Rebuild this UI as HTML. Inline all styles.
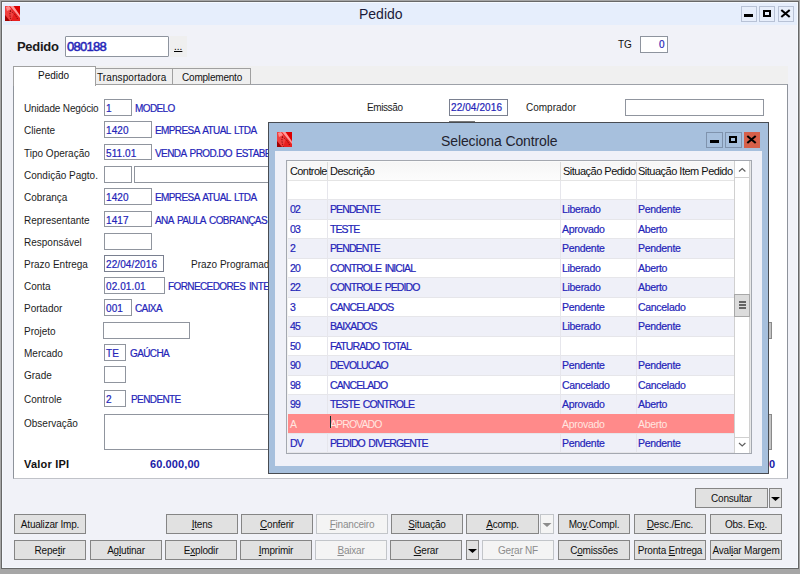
<!DOCTYPE html>
<html><head><meta charset="utf-8"><style>
html,body{margin:0;padding:0;width:800px;height:574px;overflow:hidden;background:#a6a6a6}
body>div,body>svg{position:absolute}
div{position:absolute}
.t{white-space:nowrap;font-family:"Liberation Sans", sans-serif}
u{text-decoration:underline;text-underline-offset:1px}
</style></head><body>
<div style="left:0px;top:0px;width:800px;height:574px;background:#a6a6a6"></div>
<div style="left:1px;top:1px;width:798px;height:568px;background:#686868"></div>
<div style="left:2px;top:2px;width:796px;height:566px;background:#f5f9ff"></div>
<div style="left:3px;top:3px;width:794px;height:564px;background:#f1f2f8"></div>
<div style="left:3px;top:3px;width:794px;height:22px;background:#e6eefc"></div>
<svg style="position:absolute;left:5px;top:6px" width="15" height="15" viewBox="0 0 15 15"><rect x="0" y="0" width="15" height="15" fill="#dc0000"/><path d="M0 0 L8 0 L15 10 L15 15 L0 15 Z" fill="#e82020"/><path d="M5 0 L8.5 0 L15 9.5 L15 12 Z" fill="#ff9898"/><path d="M0 0 L4 0 L9 7 L6 15 L0 15 Z" fill="#f04040"/><path d="M1 1 L4 0 L6 3 L2 5 Z" fill="#ff8c8c"/><path d="M0 9 L0 15 L5 15 Z" fill="#a00000"/><path d="M5.5 4.5 Q4 9 6.5 15" stroke="#7a0000" stroke-width="1" stroke-dasharray="1.3 1.2" fill="none"/><path d="M5 5 Q10 7 12.5 13" stroke="#7a0000" stroke-width="1" stroke-dasharray="1.3 1.2" fill="none"/></svg>
<div class="t" style="left:359px;top:7.15px;font-size:14px;line-height:14px;color:#1b1b3a;font-weight:400;letter-spacing:0px;">Pedido</div>
<div style="left:741px;top:6px;width:16px;height:16px;background:#e7eefb;border:1px solid #b8c2d6;box-sizing:border-box"></div>
<div style="left:744px;top:14px;width:9px;height:3px;background:#000"></div>
<div style="left:759px;top:6px;width:16px;height:16px;background:#e7eefb;border:1px solid #b8c2d6;box-sizing:border-box"></div>
<div style="left:763px;top:10px;width:8px;height:7px;border:2px solid #000;border-top-width:2.5px;box-sizing:border-box"></div>
<div style="left:778px;top:6px;width:16px;height:16px;background:#e7eefb;border:1px solid #b8c2d6;box-sizing:border-box"></div>
<svg style="position:absolute;left:780px;top:9px" width="11" height="9"><path d="M1.3 1 L9.7 8 M9.7 1 L1.3 8" stroke="#000" stroke-width="2.1"/></svg>
<div class="t" style="left:17px;top:40.0px;font-size:13px;line-height:13px;color:#1a1a1a;font-weight:700;letter-spacing:-0.3px;">Pedido</div>
<div style="left:65px;top:36px;width:104px;height:21px;background:#fff;border:1px solid #8e949e;box-sizing:border-box;border-radius:1px"></div>
<div class="t" style="left:67px;top:40.0px;font-size:13px;line-height:13px;color:#2424b8;font-weight:400;letter-spacing:-0.75px;-webkit-text-stroke:0.5px #2424b8">080188</div>
<div style="left:170px;top:36px;width:17px;height:21px;background:#efefef"></div>
<div class="t" style="left:174px;top:41.54px;font-size:10px;line-height:10px;color:#000;font-weight:400;letter-spacing:0px;"><u>...</u></div>
<div class="t" style="left:618px;top:39.54px;font-size:10px;line-height:10px;color:#111;font-weight:400;letter-spacing:0px;">TG</div>
<div style="left:640px;top:36px;width:28px;height:17px;background:#fff;border:1px solid #8e949e;box-sizing:border-box"></div>
<div class="t" style="left:659px;top:39.54px;font-size:10px;line-height:10px;color:#2424b8;font-weight:400;letter-spacing:0px;;-webkit-text-stroke:0.2px #2424b8">0</div>
<div style="left:13px;top:66px;width:775px;height:18px;background:#f0f0f0"></div>
<div style="left:13px;top:84px;width:775px;height:395px;background:#fff;border:1px solid #8e939b;border-top-color:#9da1a8;border-bottom-color:#c0c2c8;box-sizing:border-box"></div>
<div style="left:95px;top:68px;width:78px;height:17px;background:#efefef;border:1px solid #a0a0a0;box-sizing:border-box"></div>
<div style="left:172px;top:68px;width:79px;height:17px;background:#efefef;border:1px solid #a0a0a0;box-sizing:border-box"></div>
<div style="left:13px;top:66px;width:83px;height:20px;background:#fff;border:1px solid #a0a0a0;border-bottom:none;box-sizing:border-box"></div>
<div class="t" style="left:38px;top:70.53999999999999px;font-size:10px;line-height:10px;color:#111;font-weight:400;letter-spacing:0px;">Pedido</div>
<div class="t" style="left:97px;top:72.53999999999999px;font-size:10px;line-height:10px;color:#111;font-weight:400;letter-spacing:0.1px;">Transportadora</div>
<div class="t" style="left:182px;top:72.53999999999999px;font-size:10px;line-height:10px;color:#111;font-weight:400;letter-spacing:-0.2px;">Complemento</div>
<div class="t" style="left:24px;top:103.53999999999999px;font-size:10px;line-height:10px;color:#1c1c1c;font-weight:400;letter-spacing:-0.15px;">Unidade Negócio</div>
<div style="left:104px;top:99px;width:28px;height:17px;background:#fff;border:1px solid #90959e;box-sizing:border-box"></div>
<div class="t" style="left:106px;top:103.53999999999999px;font-size:10px;line-height:10px;color:#2424b8;font-weight:400;letter-spacing:0.1px;;-webkit-text-stroke:0.2px #2424b8">1</div>
<div class="t" style="left:135px;top:103.53999999999999px;font-size:10px;line-height:10px;color:#2424b8;font-weight:400;letter-spacing:-0.6px;word-spacing:1.5px;-webkit-text-stroke:0.2px #2424b8">MODELO</div>
<div class="t" style="left:24px;top:125.53999999999999px;font-size:10px;line-height:10px;color:#1c1c1c;font-weight:400;letter-spacing:0px;">Cliente</div>
<div style="left:104px;top:121px;width:48px;height:17px;background:#fff;border:1px solid #90959e;box-sizing:border-box"></div>
<div class="t" style="left:106px;top:125.53999999999999px;font-size:10px;line-height:10px;color:#2424b8;font-weight:400;letter-spacing:0.1px;;-webkit-text-stroke:0.2px #2424b8">1420</div>
<div class="t" style="left:155px;top:125.53999999999999px;font-size:10px;line-height:10px;color:#2424b8;font-weight:400;letter-spacing:-0.6px;word-spacing:1.5px;-webkit-text-stroke:0.2px #2424b8">EMPRESA ATUAL LTDA</div>
<div class="t" style="left:24px;top:148.54px;font-size:10px;line-height:10px;color:#1c1c1c;font-weight:400;letter-spacing:0px;">Tipo Operação</div>
<div style="left:104px;top:144px;width:48px;height:16px;background:#fff;border:1px solid #90959e;box-sizing:border-box"></div>
<div class="t" style="left:106px;top:148.54px;font-size:10px;line-height:10px;color:#2424b8;font-weight:400;letter-spacing:0.1px;;-webkit-text-stroke:0.2px #2424b8">511.01</div>
<div class="t" style="left:155px;top:148.54px;font-size:10px;line-height:10px;color:#2424b8;font-weight:400;letter-spacing:-0.6px;word-spacing:1.5px;-webkit-text-stroke:0.2px #2424b8">VENDA PROD.DO ESTABELECIMENTO</div>
<div class="t" style="left:24px;top:170.54px;font-size:10px;line-height:10px;color:#1c1c1c;font-weight:400;letter-spacing:0px;">Condição Pagto.</div>
<div style="left:104px;top:166px;width:28px;height:17px;background:#fff;border:1px solid #90959e;box-sizing:border-box"></div>
<div style="left:134px;top:166px;width:200px;height:17px;background:#fff;border:1px solid #90959e;box-sizing:border-box"></div>
<div class="t" style="left:24px;top:192.54px;font-size:10px;line-height:10px;color:#1c1c1c;font-weight:400;letter-spacing:0px;">Cobrança</div>
<div style="left:104px;top:188px;width:48px;height:17px;background:#fff;border:1px solid #90959e;box-sizing:border-box"></div>
<div class="t" style="left:106px;top:192.54px;font-size:10px;line-height:10px;color:#2424b8;font-weight:400;letter-spacing:0.1px;;-webkit-text-stroke:0.2px #2424b8">1420</div>
<div class="t" style="left:155px;top:192.54px;font-size:10px;line-height:10px;color:#2424b8;font-weight:400;letter-spacing:-0.6px;word-spacing:1.5px;-webkit-text-stroke:0.2px #2424b8">EMPRESA ATUAL LTDA</div>
<div class="t" style="left:24px;top:215.54px;font-size:10px;line-height:10px;color:#1c1c1c;font-weight:400;letter-spacing:0px;">Representante</div>
<div style="left:104px;top:211px;width:48px;height:16px;background:#fff;border:1px solid #90959e;box-sizing:border-box"></div>
<div class="t" style="left:106px;top:215.54px;font-size:10px;line-height:10px;color:#2424b8;font-weight:400;letter-spacing:0.1px;;-webkit-text-stroke:0.2px #2424b8">1417</div>
<div class="t" style="left:155px;top:215.54px;font-size:10px;line-height:10px;color:#2424b8;font-weight:400;letter-spacing:-0.6px;word-spacing:1.5px;-webkit-text-stroke:0.2px #2424b8">ANA PAULA COBRANÇAS</div>
<div class="t" style="left:24px;top:237.54px;font-size:10px;line-height:10px;color:#1c1c1c;font-weight:400;letter-spacing:0px;">Responsável</div>
<div style="left:104px;top:233px;width:48px;height:17px;background:#fff;border:1px solid #90959e;box-sizing:border-box"></div>
<div class="t" style="left:24px;top:259.54px;font-size:10px;line-height:10px;color:#1c1c1c;font-weight:400;letter-spacing:0px;">Prazo Entrega</div>
<div style="left:104px;top:255px;width:60px;height:17px;background:#fff;border:1px solid #7a8090;box-sizing:border-box"></div>
<div class="t" style="left:106px;top:259.54px;font-size:10px;line-height:10px;color:#2424b8;font-weight:400;letter-spacing:0.1px;;-webkit-text-stroke:0.2px #2424b8">22/04/2016</div>
<div class="t" style="left:24px;top:281.54px;font-size:10px;line-height:10px;color:#1c1c1c;font-weight:400;letter-spacing:0px;">Conta</div>
<div style="left:104px;top:277px;width:61px;height:17px;background:#fff;border:1px solid #90959e;box-sizing:border-box"></div>
<div class="t" style="left:106px;top:281.54px;font-size:10px;line-height:10px;color:#2424b8;font-weight:400;letter-spacing:0.1px;;-webkit-text-stroke:0.2px #2424b8">02.01.01</div>
<div class="t" style="left:168px;top:281.54px;font-size:10px;line-height:10px;color:#2424b8;font-weight:400;letter-spacing:-0.6px;word-spacing:1.5px;-webkit-text-stroke:0.2px #2424b8">FORNECEDORES INTERNOS</div>
<div class="t" style="left:24px;top:303.54px;font-size:10px;line-height:10px;color:#1c1c1c;font-weight:400;letter-spacing:0px;">Portador</div>
<div style="left:104px;top:299px;width:28px;height:17px;background:#fff;border:1px solid #90959e;box-sizing:border-box"></div>
<div class="t" style="left:106px;top:303.54px;font-size:10px;line-height:10px;color:#2424b8;font-weight:400;letter-spacing:0.1px;;-webkit-text-stroke:0.2px #2424b8">001</div>
<div class="t" style="left:135px;top:303.54px;font-size:10px;line-height:10px;color:#2424b8;font-weight:400;letter-spacing:-0.6px;word-spacing:1.5px;-webkit-text-stroke:0.2px #2424b8">CAIXA</div>
<div class="t" style="left:24px;top:326.54px;font-size:10px;line-height:10px;color:#1c1c1c;font-weight:400;letter-spacing:0px;">Projeto</div>
<div style="left:103px;top:322px;width:87px;height:17px;background:#fff;border:1px solid #90959e;box-sizing:border-box"></div>
<div class="t" style="left:24px;top:348.54px;font-size:10px;line-height:10px;color:#1c1c1c;font-weight:400;letter-spacing:0px;">Mercado</div>
<div style="left:104px;top:344px;width:22px;height:17px;background:#fff;border:1px solid #90959e;box-sizing:border-box"></div>
<div class="t" style="left:106px;top:348.54px;font-size:10px;line-height:10px;color:#2424b8;font-weight:400;letter-spacing:0.1px;;-webkit-text-stroke:0.2px #2424b8">TE</div>
<div class="t" style="left:130px;top:348.54px;font-size:10px;line-height:10px;color:#2424b8;font-weight:400;letter-spacing:-0.6px;word-spacing:1.5px;-webkit-text-stroke:0.2px #2424b8">GAÚCHA</div>
<div class="t" style="left:24px;top:370.54px;font-size:10px;line-height:10px;color:#1c1c1c;font-weight:400;letter-spacing:0px;">Grade</div>
<div style="left:104px;top:366px;width:22px;height:17px;background:#fff;border:1px solid #90959e;box-sizing:border-box"></div>
<div class="t" style="left:24px;top:394.54px;font-size:10px;line-height:10px;color:#1c1c1c;font-weight:400;letter-spacing:0px;">Controle</div>
<div style="left:104px;top:390px;width:22px;height:17px;background:#fff;border:1px solid #90959e;box-sizing:border-box"></div>
<div class="t" style="left:106px;top:394.54px;font-size:10px;line-height:10px;color:#2424b8;font-weight:400;letter-spacing:0.1px;;-webkit-text-stroke:0.2px #2424b8">2</div>
<div class="t" style="left:131px;top:394.54px;font-size:10px;line-height:10px;color:#2424b8;font-weight:400;letter-spacing:-0.6px;word-spacing:1.5px;-webkit-text-stroke:0.2px #2424b8">PENDENTE</div>
<div class="t" style="left:191px;top:259.54px;font-size:10px;line-height:10px;color:#1c1c1c;font-weight:400;letter-spacing:0px;">Prazo Programado</div>
<div class="t" style="left:24px;top:418.54px;font-size:10px;line-height:10px;color:#1c1c1c;font-weight:400;letter-spacing:0px;">Observação</div>
<div style="left:104px;top:414px;width:668px;height:36px;background:#fff;border:1px solid #90959e;box-sizing:border-box"></div>
<div class="t" style="left:24px;top:458.69px;font-size:11px;line-height:11px;color:#111;font-weight:700;letter-spacing:0.2px;">Valor IPI</div>
<div class="t" style="left:150px;top:458.69px;font-size:11px;line-height:11px;color:#1a1aa8;font-weight:700;letter-spacing:0.1px;">60.000,00</div>
<div class="t" style="left:769px;top:458.69px;font-size:11px;line-height:11px;color:#1a1aa8;font-weight:700;letter-spacing:0px;">0</div>
<div class="t" style="left:367px;top:102.53999999999999px;font-size:10px;line-height:10px;color:#1c1c1c;font-weight:400;letter-spacing:-0.4px;">Emissão</div>
<div style="left:449px;top:99px;width:59px;height:17px;background:#fff;border:1px solid #7a8090;box-sizing:border-box"></div>
<div class="t" style="left:451px;top:102.53999999999999px;font-size:10px;line-height:10px;color:#2424b8;font-weight:400;letter-spacing:0.1px;;-webkit-text-stroke:0.2px #2424b8">22/04/2016</div>
<div class="t" style="left:526px;top:102.53999999999999px;font-size:10px;line-height:10px;color:#1c1c1c;font-weight:400;letter-spacing:0px;">Comprador</div>
<div style="left:625px;top:99px;width:139px;height:17px;background:#fff;border:1px solid #90959e;box-sizing:border-box"></div>
<div style="left:449px;top:121px;width:26px;height:1px;background:#777"></div>
<div style="left:768px;top:322px;width:4px;height:17px;background:#c4c4c4;border:1px solid #8a8a8a;border-left:none;box-sizing:border-box"></div>
<div style="left:768px;top:414px;width:4px;height:36px;background:#c4c4c4;border:1px solid #8a8a8a;border-left:none;box-sizing:border-box"></div>
<div style="left:695px;top:488px;width:73px;height:20px;background:#e1e1e1;border:1px solid #858585;box-sizing:border-box"></div>
<div class="t" style="left:695px;width:73px;text-align:center;top:493.54px;font-size:10px;line-height:10px;color:#111;font-weight:400;letter-spacing:-0.2px;">Consultar</div>
<div style="left:769px;top:488px;width:13px;height:20px;background:#e1e1e1;border:1px solid #858585;box-sizing:border-box"></div>
<svg style="position:absolute;left:769px;top:488px" width="13" height="20"><path d="M2.0 9.0 L11.0 9.0 L6.5 13.0 Z" fill="#000"/></svg>
<div style="left:14px;top:514px;width:72px;height:20px;background:#e1e1e1;border:1px solid #858585;box-sizing:border-box"></div>
<div class="t" style="left:14px;width:72px;text-align:center;top:519.54px;font-size:10px;line-height:10px;color:#111;font-weight:400;letter-spacing:-0.2px;">Atualizar Imp.</div>
<div style="left:166px;top:514px;width:72px;height:20px;background:#e1e1e1;border:1px solid #858585;box-sizing:border-box"></div>
<div class="t" style="left:166px;width:72px;text-align:center;top:519.54px;font-size:10px;line-height:10px;color:#111;font-weight:400;letter-spacing:-0.2px;"><u>I</u>tens</div>
<div style="left:241px;top:514px;width:72px;height:20px;background:#e1e1e1;border:1px solid #858585;box-sizing:border-box"></div>
<div class="t" style="left:241px;width:72px;text-align:center;top:519.54px;font-size:10px;line-height:10px;color:#111;font-weight:400;letter-spacing:-0.2px;"><u>C</u>onferir</div>
<div style="left:316px;top:514px;width:72px;height:20px;background:#f4f4f4;border:1px solid #c2c5c9;box-sizing:border-box"></div>
<div class="t" style="left:316px;width:72px;text-align:center;top:519.54px;font-size:10px;line-height:10px;color:#8c8c8c;font-weight:400;letter-spacing:-0.2px;"><u>F</u>inanceiro</div>
<div style="left:391px;top:514px;width:72px;height:20px;background:#e1e1e1;border:1px solid #858585;box-sizing:border-box"></div>
<div class="t" style="left:391px;width:72px;text-align:center;top:519.54px;font-size:10px;line-height:10px;color:#111;font-weight:400;letter-spacing:-0.2px;"><u>S</u>ituação</div>
<div style="left:466px;top:514px;width:73px;height:20px;background:#e1e1e1;border:1px solid #858585;box-sizing:border-box"></div>
<div class="t" style="left:466px;width:73px;text-align:center;top:519.54px;font-size:10px;line-height:10px;color:#111;font-weight:400;letter-spacing:-0.2px;"><u>A</u>comp.</div>
<div style="left:540px;top:514px;width:14px;height:20px;background:#f4f4f4;border:1px solid #c2c5c9;box-sizing:border-box"></div>
<svg style="position:absolute;left:540px;top:514px" width="14" height="20"><path d="M2.5 9.0 L11.5 9.0 L7.0 13.0 Z" fill="#8c8c8c"/></svg>
<div style="left:558px;top:514px;width:72px;height:20px;background:#e1e1e1;border:1px solid #858585;box-sizing:border-box"></div>
<div class="t" style="left:558px;width:72px;text-align:center;top:519.54px;font-size:10px;line-height:10px;color:#111;font-weight:400;letter-spacing:-0.2px;">Mo<u>v</u>.Compl.</div>
<div style="left:634px;top:514px;width:72px;height:20px;background:#e1e1e1;border:1px solid #858585;box-sizing:border-box"></div>
<div class="t" style="left:634px;width:72px;text-align:center;top:519.54px;font-size:10px;line-height:10px;color:#111;font-weight:400;letter-spacing:-0.2px;"><u>D</u>esc./Enc.</div>
<div style="left:710px;top:514px;width:72px;height:20px;background:#e1e1e1;border:1px solid #858585;box-sizing:border-box"></div>
<div class="t" style="left:710px;width:72px;text-align:center;top:519.54px;font-size:10px;line-height:10px;color:#111;font-weight:400;letter-spacing:-0.2px;">Obs. Ex<u>p</u>.</div>
<div style="left:14px;top:540px;width:72px;height:20px;background:#e1e1e1;border:1px solid #858585;box-sizing:border-box"></div>
<div class="t" style="left:14px;width:72px;text-align:center;top:545.54px;font-size:10px;line-height:10px;color:#111;font-weight:400;letter-spacing:-0.2px;">Repe<u>t</u>ir</div>
<div style="left:90px;top:540px;width:72px;height:20px;background:#e1e1e1;border:1px solid #858585;box-sizing:border-box"></div>
<div class="t" style="left:90px;width:72px;text-align:center;top:545.54px;font-size:10px;line-height:10px;color:#111;font-weight:400;letter-spacing:-0.2px;">Ag<u>l</u>utinar</div>
<div style="left:165px;top:540px;width:72px;height:20px;background:#e1e1e1;border:1px solid #858585;box-sizing:border-box"></div>
<div class="t" style="left:165px;width:72px;text-align:center;top:545.54px;font-size:10px;line-height:10px;color:#111;font-weight:400;letter-spacing:-0.2px;">E<u>x</u>plodir</div>
<div style="left:240px;top:540px;width:72px;height:20px;background:#e1e1e1;border:1px solid #858585;box-sizing:border-box"></div>
<div class="t" style="left:240px;width:72px;text-align:center;top:545.54px;font-size:10px;line-height:10px;color:#111;font-weight:400;letter-spacing:-0.2px;"><u>I</u>mprimir</div>
<div style="left:315px;top:540px;width:72px;height:20px;background:#f4f4f4;border:1px solid #c2c5c9;box-sizing:border-box"></div>
<div class="t" style="left:315px;width:72px;text-align:center;top:545.54px;font-size:10px;line-height:10px;color:#8c8c8c;font-weight:400;letter-spacing:-0.2px;"><u>B</u>aixar</div>
<div style="left:390px;top:540px;width:72px;height:20px;background:#e1e1e1;border:1px solid #858585;box-sizing:border-box"></div>
<div class="t" style="left:390px;width:72px;text-align:center;top:545.54px;font-size:10px;line-height:10px;color:#111;font-weight:400;letter-spacing:-0.2px;"><u>G</u>erar</div>
<div style="left:466px;top:540px;width:13px;height:20px;background:#e1e1e1;border:1px solid #858585;box-sizing:border-box"></div>
<svg style="position:absolute;left:466px;top:540px" width="13" height="20"><path d="M2.0 9.0 L11.0 9.0 L6.5 13.0 Z" fill="#000"/></svg>
<div style="left:482px;top:540px;width:72px;height:20px;background:#f4f4f4;border:1px solid #c2c5c9;box-sizing:border-box"></div>
<div class="t" style="left:482px;width:72px;text-align:center;top:545.54px;font-size:10px;line-height:10px;color:#8c8c8c;font-weight:400;letter-spacing:-0.2px;">Ge<u>r</u>ar NF</div>
<div style="left:558px;top:540px;width:72px;height:20px;background:#e1e1e1;border:1px solid #858585;box-sizing:border-box"></div>
<div class="t" style="left:558px;width:72px;text-align:center;top:545.54px;font-size:10px;line-height:10px;color:#111;font-weight:400;letter-spacing:-0.2px;">C<u>o</u>missões</div>
<div style="left:634px;top:540px;width:72px;height:20px;background:#e1e1e1;border:1px solid #858585;box-sizing:border-box"></div>
<div class="t" style="left:634px;width:72px;text-align:center;top:545.54px;font-size:10px;line-height:10px;color:#111;font-weight:400;letter-spacing:-0.2px;">Pronta <u>E</u>ntrega</div>
<div style="left:710px;top:540px;width:72px;height:20px;background:#e1e1e1;border:1px solid #858585;box-sizing:border-box"></div>
<div class="t" style="left:710px;width:72px;text-align:center;top:545.54px;font-size:10px;line-height:10px;color:#111;font-weight:400;letter-spacing:-0.2px;">Aval<u>i</u>ar Margem</div>
<div style="left:268px;top:122px;width:501px;height:352px;background:#484c52"></div>
<div style="left:269px;top:123px;width:499px;height:350px;background:#a7c0dd"></div>
<svg style="position:absolute;left:277px;top:132px" width="15" height="15" viewBox="0 0 15 15"><rect x="0" y="0" width="15" height="15" fill="#dc0000"/><path d="M0 0 L8 0 L15 10 L15 15 L0 15 Z" fill="#e82020"/><path d="M5 0 L8.5 0 L15 9.5 L15 12 Z" fill="#ff9898"/><path d="M0 0 L4 0 L9 7 L6 15 L0 15 Z" fill="#f04040"/><path d="M1 1 L4 0 L6 3 L2 5 Z" fill="#ff8c8c"/><path d="M0 9 L0 15 L5 15 Z" fill="#a00000"/><path d="M5.5 4.5 Q4 9 6.5 15" stroke="#7a0000" stroke-width="1" stroke-dasharray="1.3 1.2" fill="none"/><path d="M5 5 Q10 7 12.5 13" stroke="#7a0000" stroke-width="1" stroke-dasharray="1.3 1.2" fill="none"/></svg>
<div class="t" style="left:441px;top:134.15px;font-size:14px;line-height:14px;color:#23232f;font-weight:400;letter-spacing:-0.1px;">Seleciona Controle</div>
<div style="left:706px;top:132px;width:17px;height:16px;background:#a7c0dd;border:1px solid #7f93ad;box-sizing:border-box"></div>
<div style="left:710px;top:140px;width:9px;height:3px;background:#000"></div>
<div style="left:725px;top:132px;width:17px;height:16px;background:#a7c0dd;border:1px solid #7f93ad;box-sizing:border-box"></div>
<div style="left:729px;top:136px;width:8px;height:7px;border:2px solid #000;border-top-width:2.5px;box-sizing:border-box"></div>
<div style="left:744px;top:132px;width:16px;height:16px;background:#d6604a;border:1px solid #d6604a;box-sizing:border-box"></div>
<svg style="position:absolute;left:746px;top:135px" width="11" height="9"><path d="M1.3 1 L9.7 8 M9.7 1 L1.3 8" stroke="#000" stroke-width="2.1"/></svg>
<div style="left:275px;top:151px;width:487px;height:315px;background:#f0f1f8"></div>
<div style="left:286px;top:160px;width:466px;height:294px;background:#fff;border:1px solid #a4a8b0;box-sizing:border-box"></div>
<div style="left:287px;top:161px;width:463px;height:1px;background:#fafafa"></div>
<div style="left:287px;top:162px;width:447px;height:18px;background:linear-gradient(#f6f6f6,#fcfcfc)"></div>
<div style="left:287px;top:180px;width:447px;height:1px;background:#e4e4e4"></div>
<div style="left:327px;top:162px;width:1px;height:18px;background:#dcdcdc"></div>
<div style="left:560px;top:162px;width:1px;height:18px;background:#dcdcdc"></div>
<div style="left:636px;top:162px;width:1px;height:18px;background:#dcdcdc"></div>
<div class="t" style="left:290px;top:165.69px;font-size:11px;line-height:11px;color:#111;font-weight:400;letter-spacing:-0.6px;">Controle</div>
<div class="t" style="left:330px;top:165.69px;font-size:11px;line-height:11px;color:#111;font-weight:400;letter-spacing:-0.5px;">Descrição</div>
<div class="t" style="left:563px;top:165.69px;font-size:11px;line-height:11px;color:#111;font-weight:400;letter-spacing:-0.5px;">Situação Pedido</div>
<div class="t" style="left:638px;top:165.69px;font-size:11px;line-height:11px;color:#111;font-weight:400;letter-spacing:-0.5px;">Situação Item Pedido</div>
<div style="left:288px;top:181px;width:446px;height:18px;background:#ffffff"></div>
<div style="left:327px;top:181px;width:1px;height:18px;background:#e6e6ec"></div>
<div style="left:560px;top:181px;width:1px;height:18px;background:#e6e6ec"></div>
<div style="left:636px;top:181px;width:1px;height:18px;background:#e6e6ec"></div>
<div style="left:288px;top:199px;width:446px;height:20px;background:#eff0f8"></div>
<div style="left:288px;top:199px;width:446px;height:1px;background:#e6e6ea"></div>
<div style="left:327px;top:199px;width:1px;height:20px;background:#e6e6ec"></div>
<div style="left:560px;top:199px;width:1px;height:20px;background:#e6e6ec"></div>
<div style="left:636px;top:199px;width:1px;height:20px;background:#e6e6ec"></div>
<div class="t" style="left:290px;top:204.11px;font-size:10.5px;line-height:10.5px;color:#2424b8;font-weight:400;letter-spacing:-0.9px;word-spacing:1.5px;-webkit-text-stroke:0.2px #2424b8">02</div>
<div class="t" style="left:330px;top:204.11px;font-size:10.5px;line-height:10.5px;color:#2424b8;font-weight:400;letter-spacing:-0.9px;word-spacing:1.5px;-webkit-text-stroke:0.2px #2424b8">PENDENTE</div>
<div class="t" style="left:562px;top:204.11px;font-size:10.5px;line-height:10.5px;color:#2424b8;font-weight:400;letter-spacing:-0.3px;;-webkit-text-stroke:0.2px #2424b8">Liberado</div>
<div class="t" style="left:638px;top:204.11px;font-size:10.5px;line-height:10.5px;color:#2424b8;font-weight:400;letter-spacing:-0.3px;;-webkit-text-stroke:0.2px #2424b8">Pendente</div>
<div style="left:288px;top:219px;width:446px;height:19px;background:#ffffff"></div>
<div style="left:288px;top:219px;width:446px;height:1px;background:#e6e6ea"></div>
<div style="left:327px;top:219px;width:1px;height:19px;background:#e6e6ec"></div>
<div style="left:560px;top:219px;width:1px;height:19px;background:#e6e6ec"></div>
<div style="left:636px;top:219px;width:1px;height:19px;background:#e6e6ec"></div>
<div class="t" style="left:290px;top:224.11px;font-size:10.5px;line-height:10.5px;color:#2424b8;font-weight:400;letter-spacing:-0.9px;word-spacing:1.5px;-webkit-text-stroke:0.2px #2424b8">03</div>
<div class="t" style="left:330px;top:224.11px;font-size:10.5px;line-height:10.5px;color:#2424b8;font-weight:400;letter-spacing:-0.9px;word-spacing:1.5px;-webkit-text-stroke:0.2px #2424b8">TESTE</div>
<div class="t" style="left:562px;top:224.11px;font-size:10.5px;line-height:10.5px;color:#2424b8;font-weight:400;letter-spacing:-0.3px;;-webkit-text-stroke:0.2px #2424b8">Aprovado</div>
<div class="t" style="left:638px;top:224.11px;font-size:10.5px;line-height:10.5px;color:#2424b8;font-weight:400;letter-spacing:-0.3px;;-webkit-text-stroke:0.2px #2424b8">Aberto</div>
<div style="left:288px;top:238px;width:446px;height:20px;background:#eff0f8"></div>
<div style="left:288px;top:238px;width:446px;height:1px;background:#e6e6ea"></div>
<div style="left:327px;top:238px;width:1px;height:20px;background:#e6e6ec"></div>
<div style="left:560px;top:238px;width:1px;height:20px;background:#e6e6ec"></div>
<div style="left:636px;top:238px;width:1px;height:20px;background:#e6e6ec"></div>
<div class="t" style="left:290px;top:243.11px;font-size:10.5px;line-height:10.5px;color:#2424b8;font-weight:400;letter-spacing:-0.9px;word-spacing:1.5px;-webkit-text-stroke:0.2px #2424b8">2</div>
<div class="t" style="left:330px;top:243.11px;font-size:10.5px;line-height:10.5px;color:#2424b8;font-weight:400;letter-spacing:-0.9px;word-spacing:1.5px;-webkit-text-stroke:0.2px #2424b8">PENDENTE</div>
<div class="t" style="left:562px;top:243.11px;font-size:10.5px;line-height:10.5px;color:#2424b8;font-weight:400;letter-spacing:-0.3px;;-webkit-text-stroke:0.2px #2424b8">Pendente</div>
<div class="t" style="left:638px;top:243.11px;font-size:10.5px;line-height:10.5px;color:#2424b8;font-weight:400;letter-spacing:-0.3px;;-webkit-text-stroke:0.2px #2424b8">Pendente</div>
<div style="left:288px;top:258px;width:446px;height:19px;background:#ffffff"></div>
<div style="left:288px;top:258px;width:446px;height:1px;background:#e6e6ea"></div>
<div style="left:327px;top:258px;width:1px;height:19px;background:#e6e6ec"></div>
<div style="left:560px;top:258px;width:1px;height:19px;background:#e6e6ec"></div>
<div style="left:636px;top:258px;width:1px;height:19px;background:#e6e6ec"></div>
<div class="t" style="left:290px;top:263.11px;font-size:10.5px;line-height:10.5px;color:#2424b8;font-weight:400;letter-spacing:-0.9px;word-spacing:1.5px;-webkit-text-stroke:0.2px #2424b8">20</div>
<div class="t" style="left:330px;top:263.11px;font-size:10.5px;line-height:10.5px;color:#2424b8;font-weight:400;letter-spacing:-0.9px;word-spacing:1.5px;-webkit-text-stroke:0.2px #2424b8">CONTROLE INICIAL</div>
<div class="t" style="left:562px;top:263.11px;font-size:10.5px;line-height:10.5px;color:#2424b8;font-weight:400;letter-spacing:-0.3px;;-webkit-text-stroke:0.2px #2424b8">Liberado</div>
<div class="t" style="left:638px;top:263.11px;font-size:10.5px;line-height:10.5px;color:#2424b8;font-weight:400;letter-spacing:-0.3px;;-webkit-text-stroke:0.2px #2424b8">Aberto</div>
<div style="left:288px;top:277px;width:446px;height:20px;background:#eff0f8"></div>
<div style="left:288px;top:277px;width:446px;height:1px;background:#e6e6ea"></div>
<div style="left:327px;top:277px;width:1px;height:20px;background:#e6e6ec"></div>
<div style="left:560px;top:277px;width:1px;height:20px;background:#e6e6ec"></div>
<div style="left:636px;top:277px;width:1px;height:20px;background:#e6e6ec"></div>
<div class="t" style="left:290px;top:282.11px;font-size:10.5px;line-height:10.5px;color:#2424b8;font-weight:400;letter-spacing:-0.9px;word-spacing:1.5px;-webkit-text-stroke:0.2px #2424b8">22</div>
<div class="t" style="left:330px;top:282.11px;font-size:10.5px;line-height:10.5px;color:#2424b8;font-weight:400;letter-spacing:-0.9px;word-spacing:1.5px;-webkit-text-stroke:0.2px #2424b8">CONTROLE PEDIDO</div>
<div class="t" style="left:562px;top:282.11px;font-size:10.5px;line-height:10.5px;color:#2424b8;font-weight:400;letter-spacing:-0.3px;;-webkit-text-stroke:0.2px #2424b8">Liberado</div>
<div class="t" style="left:638px;top:282.11px;font-size:10.5px;line-height:10.5px;color:#2424b8;font-weight:400;letter-spacing:-0.3px;;-webkit-text-stroke:0.2px #2424b8">Aberto</div>
<div style="left:288px;top:297px;width:446px;height:19px;background:#ffffff"></div>
<div style="left:288px;top:297px;width:446px;height:1px;background:#e6e6ea"></div>
<div style="left:327px;top:297px;width:1px;height:19px;background:#e6e6ec"></div>
<div style="left:560px;top:297px;width:1px;height:19px;background:#e6e6ec"></div>
<div style="left:636px;top:297px;width:1px;height:19px;background:#e6e6ec"></div>
<div class="t" style="left:290px;top:302.11px;font-size:10.5px;line-height:10.5px;color:#2424b8;font-weight:400;letter-spacing:-0.9px;word-spacing:1.5px;-webkit-text-stroke:0.2px #2424b8">3</div>
<div class="t" style="left:330px;top:302.11px;font-size:10.5px;line-height:10.5px;color:#2424b8;font-weight:400;letter-spacing:-0.9px;word-spacing:1.5px;-webkit-text-stroke:0.2px #2424b8">CANCELADOS</div>
<div class="t" style="left:562px;top:302.11px;font-size:10.5px;line-height:10.5px;color:#2424b8;font-weight:400;letter-spacing:-0.3px;;-webkit-text-stroke:0.2px #2424b8">Pendente</div>
<div class="t" style="left:638px;top:302.11px;font-size:10.5px;line-height:10.5px;color:#2424b8;font-weight:400;letter-spacing:-0.3px;;-webkit-text-stroke:0.2px #2424b8">Cancelado</div>
<div style="left:288px;top:316px;width:446px;height:20px;background:#eff0f8"></div>
<div style="left:288px;top:316px;width:446px;height:1px;background:#e6e6ea"></div>
<div style="left:327px;top:316px;width:1px;height:20px;background:#e6e6ec"></div>
<div style="left:560px;top:316px;width:1px;height:20px;background:#e6e6ec"></div>
<div style="left:636px;top:316px;width:1px;height:20px;background:#e6e6ec"></div>
<div class="t" style="left:290px;top:321.11px;font-size:10.5px;line-height:10.5px;color:#2424b8;font-weight:400;letter-spacing:-0.9px;word-spacing:1.5px;-webkit-text-stroke:0.2px #2424b8">45</div>
<div class="t" style="left:330px;top:321.11px;font-size:10.5px;line-height:10.5px;color:#2424b8;font-weight:400;letter-spacing:-0.9px;word-spacing:1.5px;-webkit-text-stroke:0.2px #2424b8">BAIXADOS</div>
<div class="t" style="left:562px;top:321.11px;font-size:10.5px;line-height:10.5px;color:#2424b8;font-weight:400;letter-spacing:-0.3px;;-webkit-text-stroke:0.2px #2424b8">Liberado</div>
<div class="t" style="left:638px;top:321.11px;font-size:10.5px;line-height:10.5px;color:#2424b8;font-weight:400;letter-spacing:-0.3px;;-webkit-text-stroke:0.2px #2424b8">Pendente</div>
<div style="left:288px;top:336px;width:446px;height:19px;background:#ffffff"></div>
<div style="left:288px;top:336px;width:446px;height:1px;background:#e6e6ea"></div>
<div style="left:327px;top:336px;width:1px;height:19px;background:#e6e6ec"></div>
<div style="left:560px;top:336px;width:1px;height:19px;background:#e6e6ec"></div>
<div style="left:636px;top:336px;width:1px;height:19px;background:#e6e6ec"></div>
<div class="t" style="left:290px;top:341.11px;font-size:10.5px;line-height:10.5px;color:#2424b8;font-weight:400;letter-spacing:-0.9px;word-spacing:1.5px;-webkit-text-stroke:0.2px #2424b8">50</div>
<div class="t" style="left:330px;top:341.11px;font-size:10.5px;line-height:10.5px;color:#2424b8;font-weight:400;letter-spacing:-0.9px;word-spacing:1.5px;-webkit-text-stroke:0.2px #2424b8">FATURADO TOTAL</div>
<div style="left:288px;top:355px;width:446px;height:20px;background:#eff0f8"></div>
<div style="left:288px;top:355px;width:446px;height:1px;background:#e6e6ea"></div>
<div style="left:327px;top:355px;width:1px;height:20px;background:#e6e6ec"></div>
<div style="left:560px;top:355px;width:1px;height:20px;background:#e6e6ec"></div>
<div style="left:636px;top:355px;width:1px;height:20px;background:#e6e6ec"></div>
<div class="t" style="left:290px;top:360.11px;font-size:10.5px;line-height:10.5px;color:#2424b8;font-weight:400;letter-spacing:-0.9px;word-spacing:1.5px;-webkit-text-stroke:0.2px #2424b8">90</div>
<div class="t" style="left:330px;top:360.11px;font-size:10.5px;line-height:10.5px;color:#2424b8;font-weight:400;letter-spacing:-0.9px;word-spacing:1.5px;-webkit-text-stroke:0.2px #2424b8">DEVOLUCAO</div>
<div class="t" style="left:562px;top:360.11px;font-size:10.5px;line-height:10.5px;color:#2424b8;font-weight:400;letter-spacing:-0.3px;;-webkit-text-stroke:0.2px #2424b8">Pendente</div>
<div class="t" style="left:638px;top:360.11px;font-size:10.5px;line-height:10.5px;color:#2424b8;font-weight:400;letter-spacing:-0.3px;;-webkit-text-stroke:0.2px #2424b8">Pendente</div>
<div style="left:288px;top:375px;width:446px;height:19px;background:#ffffff"></div>
<div style="left:288px;top:375px;width:446px;height:1px;background:#e6e6ea"></div>
<div style="left:327px;top:375px;width:1px;height:19px;background:#e6e6ec"></div>
<div style="left:560px;top:375px;width:1px;height:19px;background:#e6e6ec"></div>
<div style="left:636px;top:375px;width:1px;height:19px;background:#e6e6ec"></div>
<div class="t" style="left:290px;top:380.11px;font-size:10.5px;line-height:10.5px;color:#2424b8;font-weight:400;letter-spacing:-0.9px;word-spacing:1.5px;-webkit-text-stroke:0.2px #2424b8">98</div>
<div class="t" style="left:330px;top:380.11px;font-size:10.5px;line-height:10.5px;color:#2424b8;font-weight:400;letter-spacing:-0.9px;word-spacing:1.5px;-webkit-text-stroke:0.2px #2424b8">CANCELADO</div>
<div class="t" style="left:562px;top:380.11px;font-size:10.5px;line-height:10.5px;color:#2424b8;font-weight:400;letter-spacing:-0.3px;;-webkit-text-stroke:0.2px #2424b8">Cancelado</div>
<div class="t" style="left:638px;top:380.11px;font-size:10.5px;line-height:10.5px;color:#2424b8;font-weight:400;letter-spacing:-0.3px;;-webkit-text-stroke:0.2px #2424b8">Cancelado</div>
<div style="left:288px;top:394px;width:446px;height:20px;background:#eff0f8"></div>
<div style="left:288px;top:394px;width:446px;height:1px;background:#e6e6ea"></div>
<div style="left:327px;top:394px;width:1px;height:20px;background:#e6e6ec"></div>
<div style="left:560px;top:394px;width:1px;height:20px;background:#e6e6ec"></div>
<div style="left:636px;top:394px;width:1px;height:20px;background:#e6e6ec"></div>
<div class="t" style="left:290px;top:399.11px;font-size:10.5px;line-height:10.5px;color:#2424b8;font-weight:400;letter-spacing:-0.9px;word-spacing:1.5px;-webkit-text-stroke:0.2px #2424b8">99</div>
<div class="t" style="left:330px;top:399.11px;font-size:10.5px;line-height:10.5px;color:#2424b8;font-weight:400;letter-spacing:-0.9px;word-spacing:1.5px;-webkit-text-stroke:0.2px #2424b8">TESTE CONTROLE</div>
<div class="t" style="left:562px;top:399.11px;font-size:10.5px;line-height:10.5px;color:#2424b8;font-weight:400;letter-spacing:-0.3px;;-webkit-text-stroke:0.2px #2424b8">Aprovado</div>
<div class="t" style="left:638px;top:399.11px;font-size:10.5px;line-height:10.5px;color:#2424b8;font-weight:400;letter-spacing:-0.3px;;-webkit-text-stroke:0.2px #2424b8">Aberto</div>
<div style="left:288px;top:414px;width:446px;height:19px;background:#ff8a8a"></div>
<div class="t" style="left:290px;top:419.11px;font-size:10.5px;line-height:10.5px;color:#ffe6e0;font-weight:400;letter-spacing:-0.9px;word-spacing:1.5px">A</div>
<div class="t" style="left:330px;top:419.11px;font-size:10.5px;line-height:10.5px;color:#ffe6e0;font-weight:400;letter-spacing:-0.9px;word-spacing:1.5px">APROVADO</div>
<div class="t" style="left:562px;top:419.11px;font-size:10.5px;line-height:10.5px;color:#ffe6e0;font-weight:400;letter-spacing:-0.3px;">Aprovado</div>
<div class="t" style="left:638px;top:419.11px;font-size:10.5px;line-height:10.5px;color:#ffe6e0;font-weight:400;letter-spacing:-0.3px;">Aberto</div>
<div style="left:288px;top:433px;width:446px;height:20px;background:#eff0f8"></div>
<div style="left:288px;top:433px;width:446px;height:1px;background:#e6e6ea"></div>
<div style="left:288px;top:452px;width:446px;height:1px;background:#e6e6ea"></div>
<div style="left:327px;top:433px;width:1px;height:20px;background:#e6e6ec"></div>
<div style="left:560px;top:433px;width:1px;height:20px;background:#e6e6ec"></div>
<div style="left:636px;top:433px;width:1px;height:20px;background:#e6e6ec"></div>
<div class="t" style="left:290px;top:438.11px;font-size:10.5px;line-height:10.5px;color:#2424b8;font-weight:400;letter-spacing:-0.9px;word-spacing:1.5px;-webkit-text-stroke:0.2px #2424b8">DV</div>
<div class="t" style="left:330px;top:438.11px;font-size:10.5px;line-height:10.5px;color:#2424b8;font-weight:400;letter-spacing:-0.9px;word-spacing:1.5px;-webkit-text-stroke:0.2px #2424b8">PEDIDO DIVERGENTE</div>
<div class="t" style="left:562px;top:438.11px;font-size:10.5px;line-height:10.5px;color:#2424b8;font-weight:400;letter-spacing:-0.3px;;-webkit-text-stroke:0.2px #2424b8">Pendente</div>
<div class="t" style="left:638px;top:438.11px;font-size:10.5px;line-height:10.5px;color:#2424b8;font-weight:400;letter-spacing:-0.3px;;-webkit-text-stroke:0.2px #2424b8">Pendente</div>
<div style="left:287px;top:161px;width:1px;height:292px;background:#f2f2f2"></div>
<div style="left:330px;top:416px;width:1px;height:12px;background:#103030"></div>
<div style="left:734px;top:161px;width:17px;height:292px;background:#fff"></div>
<div style="left:734px;top:161px;width:1px;height:292px;background:#d0d0d0"></div>
<div style="left:749px;top:161px;width:1px;height:292px;background:#d0d0d0"></div>
<div style="left:750px;top:161px;width:1px;height:292px;background:#e8e8e8"></div>
<div style="left:735px;top:177px;width:14px;height:1px;background:#d0d0d0"></div>
<svg style="position:absolute;left:734px;top:162px" width="16" height="16"><path d="M5 9.5 L8.2 6.5 L11.4 9.5" stroke="#606060" stroke-width="1.2" fill="none"/></svg>
<div style="left:735px;top:437px;width:14px;height:1px;background:#d0d0d0"></div>
<svg style="position:absolute;left:734px;top:437px" width="16" height="16"><path d="M5 6 L8.2 9 L11.4 6" stroke="#606060" stroke-width="1.2" fill="none"/></svg>
<div style="left:734px;top:294px;width:16px;height:23px;background:#dcdcdc;border:1px solid #a8a8a8;box-sizing:border-box"></div>
<div style="left:739px;top:301px;width:7px;height:2px;background:#666"></div>
<div style="left:739px;top:304px;width:7px;height:2px;background:#666"></div>
<div style="left:739px;top:307px;width:7px;height:2px;background:#666"></div>
</body></html>
